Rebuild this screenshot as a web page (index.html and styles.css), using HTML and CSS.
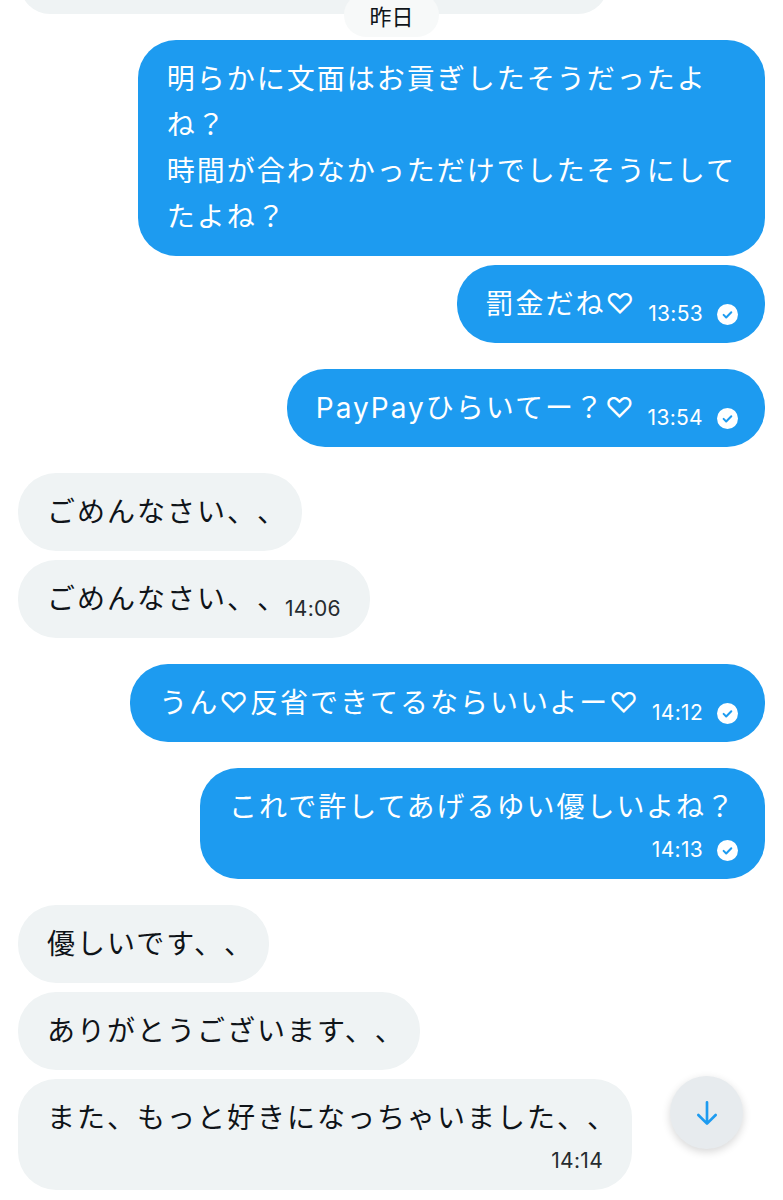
FILE: index.html
```html
<!DOCTYPE html>
<html lang="ja">
<head>
<meta charset="utf-8">
<title>DM</title>
<link rel="stylesheet" href="styles.css">
</head>
<body>
<div class="chat">
  <div class="row in">
    <div class="bubble in cut"></div>
  </div>
  <div class="date"><span class="pill">昨日</span></div>

  <div class="row out">
    <div class="bubble out">
      <p class="text">明らかに文面はお貢ぎしたそうだったよ<br>ね？<br>時間が合わなかっただけでしたそうにして<br>たよね？</p>
    </div>
  </div>

  <div class="row out tight">
    <div class="bubble out inline">
      <p class="text">罰金だね♡</p>
      <div class="meta"><span class="time">13:53</span><svg class="check" viewBox="0 0 21 21" width="21" height="21"><circle cx="10.5" cy="10.5" r="10.5" fill="#fff"/><path d="M6.6 10.9l2.6 2.6 5.1-5.3" fill="none" stroke="#1d9bf0" stroke-width="2" stroke-linecap="round" stroke-linejoin="round"/></svg></div>
    </div>
  </div>

  <div class="row out loose">
    <div class="bubble out inline">
      <p class="text">PayPayひらいてー？♡</p>
      <div class="meta"><span class="time">13:54</span><svg class="check" viewBox="0 0 21 21" width="21" height="21"><circle cx="10.5" cy="10.5" r="10.5" fill="#fff"/><path d="M6.6 10.9l2.6 2.6 5.1-5.3" fill="none" stroke="#1d9bf0" stroke-width="2" stroke-linecap="round" stroke-linejoin="round"/></svg></div>
    </div>
  </div>

  <div class="row in loose">
    <div class="bubble in">
      <p class="text trail">ごめんなさい、、</p>
    </div>
  </div>

  <div class="row in tight">
    <div class="bubble in inline">
      <p class="text trail">ごめんなさい、、</p>
      <div class="meta"><span class="time">14:06</span></div>
    </div>
  </div>

  <div class="row out loose">
    <div class="bubble out inline">
      <p class="text">うん♡反省できてるならいいよー♡</p>
      <div class="meta"><span class="time">14:12</span><svg class="check" viewBox="0 0 21 21" width="21" height="21"><circle cx="10.5" cy="10.5" r="10.5" fill="#fff"/><path d="M6.6 10.9l2.6 2.6 5.1-5.3" fill="none" stroke="#1d9bf0" stroke-width="2" stroke-linecap="round" stroke-linejoin="round"/></svg></div>
    </div>
  </div>

  <div class="row out loose">
    <div class="bubble out stack">
      <p class="text">これで許してあげるゆい優しいよね？</p>
      <div class="meta"><span class="time">14:13</span><svg class="check" viewBox="0 0 21 21" width="21" height="21"><circle cx="10.5" cy="10.5" r="10.5" fill="#fff"/><path d="M6.6 10.9l2.6 2.6 5.1-5.3" fill="none" stroke="#1d9bf0" stroke-width="2" stroke-linecap="round" stroke-linejoin="round"/></svg></div>
    </div>
  </div>

  <div class="row in loose">
    <div class="bubble in">
      <p class="text trail">優しいです、、</p>
    </div>
  </div>

  <div class="row in tight">
    <div class="bubble in">
      <p class="text trail">ありがとうございます、、</p>
    </div>
  </div>

  <div class="row in tight">
    <div class="bubble in stack">
      <p class="text trail">また、もっと好きになっちゃいました、、</p>
      <div class="meta"><span class="time">14:14</span></div>
    </div>
  </div>
</div>

<button class="scroll-down" type="button" aria-label="最新へ">
  <svg viewBox="0 0 24 24" width="32" height="32"><path d="M12 4v15.5M5.5 13.5L12 20l6.5-6.5" fill="none" stroke="#1d9bf0" stroke-width="2" stroke-linecap="round" stroke-linejoin="round"/></svg>
</button>
</body>
</html>
```

FILE: styles.css
```css
* {
  box-sizing: border-box;
}

html,
body {
  margin: 0;
  padding: 0;
  background: #ffffff;
}

body {
  font-family: "Noto Sans CJK JP", "Noto Sans", sans-serif;
  color: #0f1419;
  overflow: hidden;
}

.chat {
  display: flex;
  flex-direction: column;
  padding: 0 18px;
}

.row {
  display: flex;
}

.row.out {
  justify-content: flex-end;
}

.row.in {
  justify-content: flex-start;
}

.row.tight {
  margin-top: 9px;
}

.row.loose {
  margin-top: 26px;
}

.bubble {
  border-radius: 38px;
  padding: 16px 29px;
  font-size: 28px;
  line-height: 46px;
  letter-spacing: 2px;
  text-spacing-trim: space-all;
}

.bubble.out {
  background: #1d9bf0;
  color: #ffffff;
}

.bubble.in {
  background: #eff3f4;
  color: #0f1419;
}

.bubble.cut {
  width: 588px;
  height: 60px;
  margin-top: -46px;
  margin-left: 2px;
  padding: 0;
}

.text {
  margin: 0;
  white-space: nowrap;
  font-family: "Inter", "Noto Sans CJK JP", sans-serif;
}

.text.trail {
  margin-right: -14px;
}

.bubble.inline {
  display: flex;
  align-items: flex-end;
}

.bubble.out.inline,
.bubble.out.stack {
  padding-right: 27px;
}

.bubble.out.stack .text {
  margin-right: 2px;
}

.bubble.stack {
  display: flex;
  flex-direction: column;
}

.meta {
  display: flex;
  align-items: center;
  justify-content: flex-end;
  gap: 14px;
  height: 26px;
  font-family: "Inter", "Roboto", sans-serif;
  font-size: 21px;
  letter-spacing: 0.3px;
  line-height: 26px;
}

.bubble.inline .meta {
  margin-left: 12px;
}

.bubble.stack .meta {
  margin-top: 7px;
}

.bubble.in .meta {
  color: #262b2f;
}

.bubble.out .meta {
  color: #ffffff;
}

.check {
  display: block;
  flex: none;
}

.date {
  position: relative;
  z-index: 1;
  display: flex;
  justify-content: center;
  margin: -21px 0 3px;
}

.pill {
  display: block;
  height: 44px;
  padding: 0 25px;
  border-radius: 22px;
  background: #f7f9f9;
  font-size: 22px;
  line-height: 44px;
  color: #0f1419;
}

.scroll-down {
  position: fixed;
  left: 670px;
  top: 1076px;
  width: 73px;
  height: 73px;
  border: none;
  border-radius: 50%;
  padding: 0;
  background: #e7ebee;
  box-shadow: 0 3px 8px rgba(0, 0, 0, 0.16);
  display: flex;
  align-items: center;
  justify-content: center;
}

.scroll-down svg {
  display: block;
}
```
